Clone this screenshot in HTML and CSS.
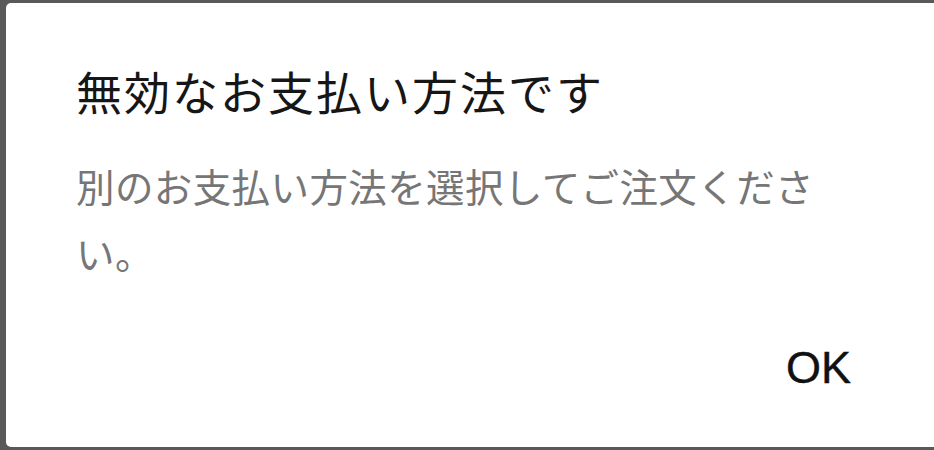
FILE: index.html
```html
<!DOCTYPE html>
<html lang="ja">
<head>
<meta charset="utf-8">
<link rel="stylesheet" href="styles.css">
</head>
<body>
<div class="dialog">
  <h1 class="title">無効なお支払い方法です</h1>
  <p class="message">別のお支払い方法を選択してご注文ください。</p>
  <div class="actions">
    <button class="ok">OK</button>
  </div>
</div>
</body>
</html>
```
FILE: styles.css
```css
html, body {
  margin: 0;
  height: 100%;
  overflow: hidden;
}
body {
  background: #595959;
  padding: 3px 0 0 6px;
  box-sizing: border-box;
  font-family: "Noto Sans CJK JP", "Noto Sans", sans-serif;
}
.dialog {
  width: 1000px;
  height: 444px;
  background: #ffffff;
  border-radius: 5px;
  box-sizing: border-box;
  padding: 60px 0 0 70px;
  display: flex;
  flex-direction: column;
}
.title {
  margin: 0;
  font-size: 46px;
  font-weight: 400;
  line-height: 55px;
  color: #161616;
  letter-spacing: 2px;
}
.message {
  margin: 34px 0 0 0;
  width: 780px;
  font-size: 38.5px;
  line-height: 67px;
  color: #767676;
  letter-spacing: 0.4px;
}
.actions {
  width: 775px;
  display: flex;
  justify-content: flex-end;
  margin-top: 57px;
}
.ok {
  border: 0;
  background: none;
  padding: 0;
  font-family: "Liberation Sans", Arial, sans-serif;
  font-size: 45px;
  line-height: 50px;
  color: #111111;
  -webkit-text-stroke: 0.4px #111111;
}
```
